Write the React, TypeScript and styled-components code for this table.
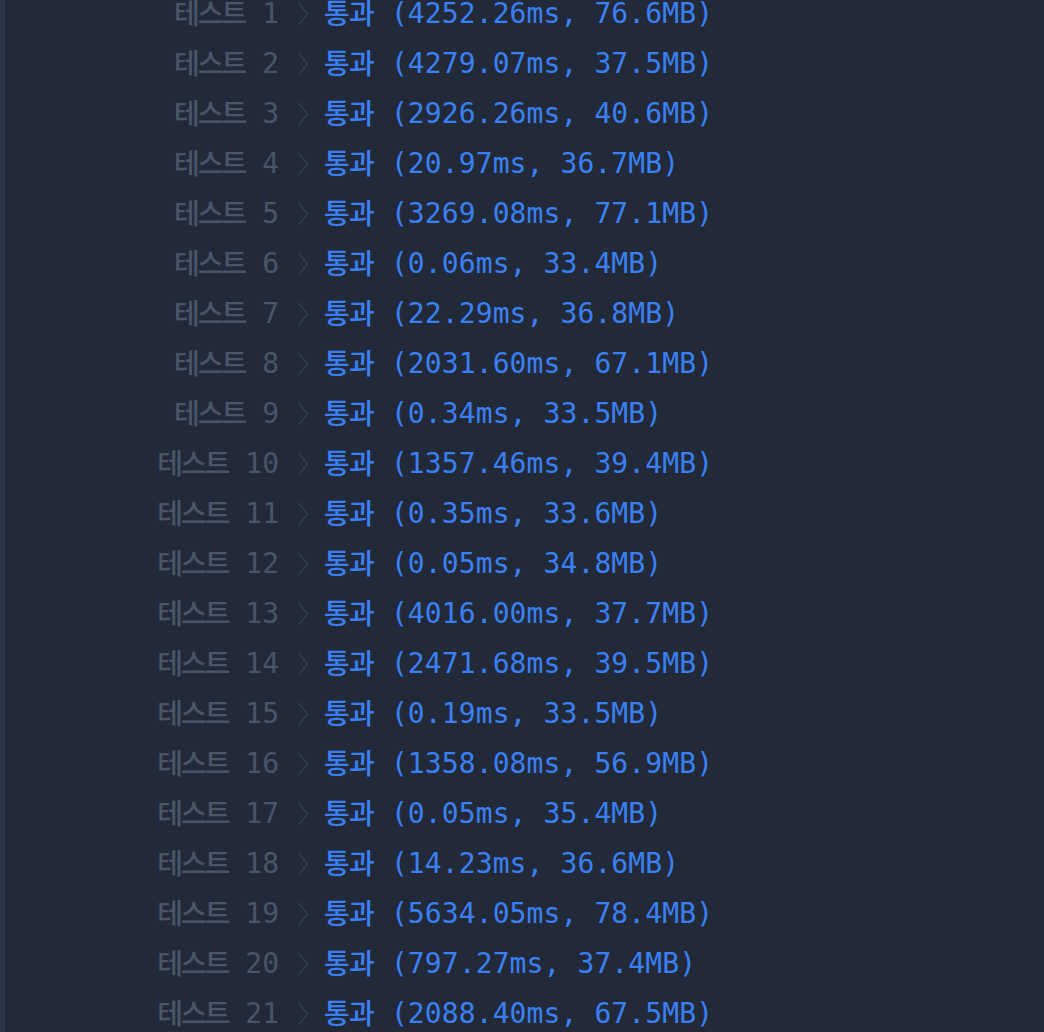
import React from "react";
import styled, { createGlobalStyle } from "styled-components";

const Global = createGlobalStyle`
  html, body { margin: 0; padding: 0; background: #222a3a; overflow: hidden; }
  body { font-family: "DejaVu Sans Mono", "Noto Sans CJK KR", monospace; }
`;

const Panel = styled.div`
  box-sizing: border-box;
  width: 1044px;
  height: 1032px;
  background: #222a3a;
  border-left: 5px solid #2b3647;
  overflow: hidden;
`;

const List = styled.ul`
  list-style: none;
  margin: -11px 0 0 0;
  padding: 0;
`;

const Row = styled.li`
  display: flex;
  align-items: center;
  height: 50px;
  line-height: 50px;
  font-size: 28px;
  white-space: pre;
`;

const Label = styled.span`
  width: 274px;
  text-align: right;
  color: #4a5567;
`;

const Hangul = styled.span<{ $spacing: number }>`
  letter-spacing: ${(p) => p.$spacing}px;
  vertical-align: -1px;
  font-weight: 500;
`;

const Chevron = styled.svg`
  margin-left: 18px;
  width: 12px;
  height: 24px;
  flex: none;
`;

const Result = styled.span`
  margin-left: 15px;
  color: #3b80f2;
  letter-spacing: 0.1px;
`;

const rows: [number, string, string][] = [
  [1, "4252.26ms", "76.6MB"],
  [2, "4279.07ms", "37.5MB"],
  [3, "2926.26ms", "40.6MB"],
  [4, "20.97ms", "36.7MB"],
  [5, "3269.08ms", "77.1MB"],
  [6, "0.06ms", "33.4MB"],
  [7, "22.29ms", "36.8MB"],
  [8, "2031.60ms", "67.1MB"],
  [9, "0.34ms", "33.5MB"],
  [10, "1357.46ms", "39.4MB"],
  [11, "0.35ms", "33.6MB"],
  [12, "0.05ms", "34.8MB"],
  [13, "4016.00ms", "37.7MB"],
  [14, "2471.68ms", "39.5MB"],
  [15, "0.19ms", "33.5MB"],
  [16, "1358.08ms", "56.9MB"],
  [17, "0.05ms", "35.4MB"],
  [18, "14.23ms", "36.6MB"],
  [19, "5634.05ms", "78.4MB"],
  [20, "797.27ms", "37.4MB"],
  [21, "2088.40ms", "67.5MB"],
];

export default function App() {
  return (
    <>
      <Global />
      <Panel>
        <List>
          {rows.map(([n, t, m]) => (
            <Row key={n}>
              <Label>
                <Hangul $spacing={-2}>테스트</Hangul> {n}
              </Label>
              <Chevron viewBox="0 0 12 24">
                <polyline
                  points="1.5,1 10.5,12 1.5,23"
                  fill="none"
                  stroke="#323d4e"
                  strokeWidth="1.6"
                />
              </Chevron>
              <Result>
                <Hangul $spacing={-0.8}>통과</Hangul> ({t}, {m})
              </Result>
            </Row>
          ))}
        </List>
      </Panel>
    </>
  );
}
